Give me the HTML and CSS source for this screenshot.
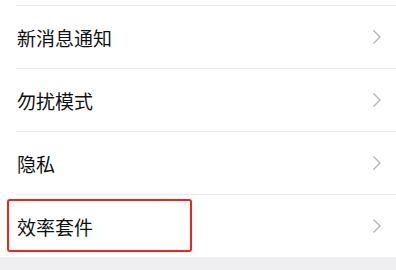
FILE: index.html
```html
<!DOCTYPE html>
<html lang="zh-CN">
<head>
    <meta charset="UTF-8">
    <meta name="viewport" content="width=device-width, initial-scale=1.0">
    <title>设置</title>
    <link rel="stylesheet" href="styles.css">
</head>
<body>
    <div class="settings-list">
        <div class="row">
            <span class="label">新消息通知</span>
            <svg class="arrow" width="10" height="16" viewBox="0 0 10 16"><path d="M1.5 1.5 L8 8 L1.5 14.5" /></svg>
        </div>
        <div class="row">
            <span class="label">勿扰模式</span>
            <svg class="arrow" width="10" height="16" viewBox="0 0 10 16"><path d="M1.5 1.5 L8 8 L1.5 14.5" /></svg>
        </div>
        <div class="row">
            <span class="label">隐私</span>
            <svg class="arrow" width="10" height="16" viewBox="0 0 10 16"><path d="M1.5 1.5 L8 8 L1.5 14.5" /></svg>
        </div>
        <div class="row">
            <span class="label">效率套件</span>
            <svg class="arrow" width="10" height="16" viewBox="0 0 10 16"><path d="M1.5 1.5 L8 8 L1.5 14.5" /></svg>
            <div class="highlight"></div>
        </div>
    </div>
    <div class="footer"></div>
</body>
</html>
```

FILE: styles.css
```css
body {
    margin: 0;
    background-color: #fff;
    font-family: "Noto Sans CJK SC", "Noto Sans", sans-serif;
}

.settings-list {
    padding-top: 5px;
}

.row {
    position: relative;
    display: flex;
    align-items: center;
    justify-content: space-between;
    height: 62px;
    margin-left: 16px;
    padding-right: 14px;
    border-top: 1px solid #e8e8e8;
}

.label {
    font-size: 19px;
    color: #111;
    padding-left: 1px;
}

.arrow {
    fill: none;
    stroke: #b4b4b4;
    stroke-width: 1.4;
}

.highlight {
    position: absolute;
    left: -9px;
    top: 4px;
    width: 181px;
    height: 49px;
    border: 2.5px solid #f2231b;
    border-radius: 3px;
}

.footer {
    height: 20px;
    background-color: #efeff2;
}
```
